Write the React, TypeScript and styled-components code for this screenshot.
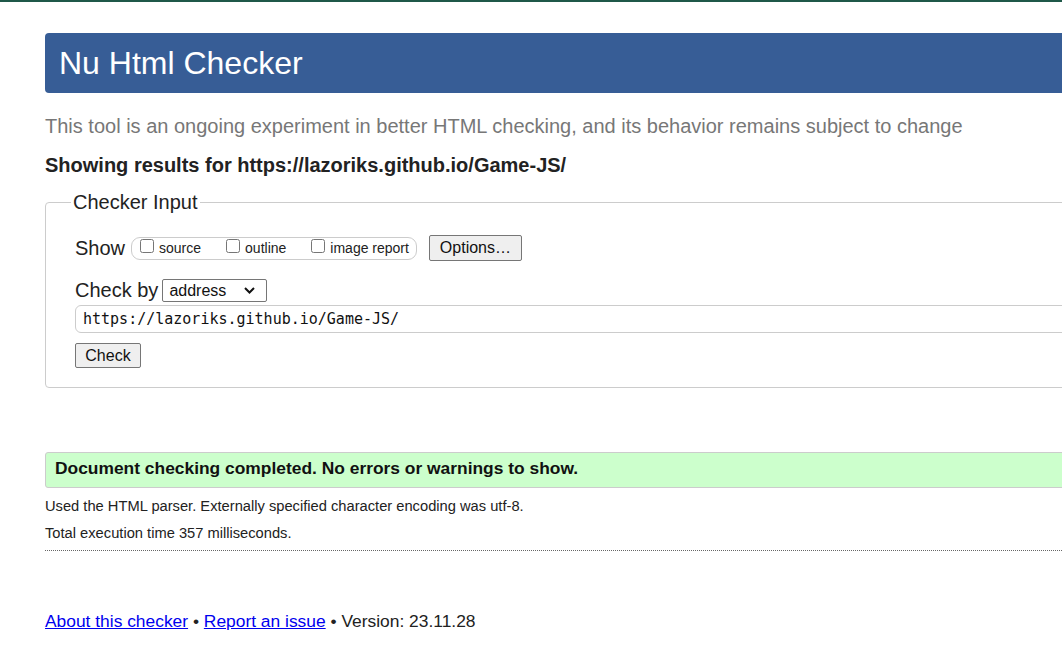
import React from "react";
import styled, { createGlobalStyle } from "styled-components";

const Global = createGlobalStyle`
  html, body { margin: 0; padding: 0; overflow: hidden; background: #fff; }
  body {
    font-family: "Liberation Sans", Arial, sans-serif;
    color: #222;
    width: 1062px;
    height: 667px;
  }
`;

const TopBar = styled.div`
  height: 2px;
  background: #1f5849;
`;

const Page = styled.div`
  width: 1160px;
  padding: 31px 0 0 45px;
  display: flex;
  flex-direction: column;
`;

const Header = styled.h1`
  margin: 0;
  height: 60px;
  line-height: 60px;
  padding: 0 14px;
  background: #375d96;
  color: #fff;
  font-size: 32px;
  font-weight: normal;
  border-radius: 4px 0 0 4px;
`;

const Intro = styled.p`
  margin: 22px 0 0;
  font-size: 20px;
  line-height: 23px;
  color: #777;
`;

const Heading = styled.h2`
  margin: 16px 0 0;
  font-size: 20px;
  line-height: 23px;
  font-weight: bold;
  color: #222;
`;

const Fieldset = styled.fieldset`
  margin: 14px 0 0;
  padding: 0 0 19px 29px;
  border: 1px solid #ccc;
  border-radius: 4px 0 0 4px;
  min-inline-size: 0;
`;

const Legend = styled.legend`
  margin-left: -4px;
  padding: 0 2px;
  font-size: 20px;
  line-height: 23px;
  color: #222;
`;

const Row = styled.div<{ $top: number }>`
  display: flex;
  align-items: center;
  margin-top: ${(p) => p.$top}px;
`;

const Label = styled.span`
  font-size: 20px;
  line-height: 23px;
  color: #222;
`;

const ShowGroup = styled.div`
  display: flex;
  align-items: center;
  gap: 25px;
  height: 21px;
  margin-left: 6px;
  padding: 0 7px 0 8px;
  border: 1px solid #ccc;
  border-radius: 9px;
`;

const CheckItem = styled.label`
  display: flex;
  align-items: center;
  gap: 5px;
  font-size: 14px;
  color: #222;
`;

const Box = styled.input`
  width: 14px;
  height: 14px;
  margin: 0;
  position: relative;
  top: -2px;
`;

const Button = styled.button<{ $w: number }>`
  height: 26px;
  width: ${(p) => p.$w}px;
  padding: 0;
  font-family: "Liberation Sans", Arial, sans-serif;
  font-size: 16px;
  color: #111;
  background: #efefef;
  border: 1px solid #767676;
  border-radius: 2px;
`;

const OptionsButton = styled(Button)`
  margin-left: 12px;
`;

const SelectWrap = styled.span`
  position: relative;
  display: inline-flex;
  margin-left: 4px;
`;

const Select = styled.select`
  appearance: none;
  width: 105px;
  height: 23px;
  padding: 0 0 0 6px;
  font-family: "Liberation Sans", Arial, sans-serif;
  font-size: 16px;
  color: #111;
  background: #fff;
  border: 1px solid #767676;
  border-radius: 2px;
`;

const Chevron = styled.svg`
  position: absolute;
  right: 12px;
  top: 8px;
  pointer-events: none;
`;

const UrlInput = styled.input`
  margin-top: 3px;
  height: 28px;
  box-sizing: border-box;
  width: 1100px;
  padding: 0 7px;
  font-family: "DejaVu Sans Mono", "Liberation Mono", monospace;
  font-size: 15px;
  color: #111;
  border: 1px solid #ccc;
  border-radius: 6px 0 0 6px;
`;

const CheckButton = styled(Button)`
  margin-top: 10px;
  height: 25px;
  align-self: flex-start;
`;

const Column = styled.div`
  display: flex;
  flex-direction: column;
`;

const Success = styled.div`
  margin-top: 64px;
  height: 34px;
  line-height: 31px;
  padding-left: 9px;
  background: #ccffcc;
  border: 1px solid #ccc;
  border-radius: 3px 0 0 3px;
  font-size: 17.4px;
  font-weight: bold;
  color: #111;
`;

const Note = styled.p<{ $top: number }>`
  margin: ${(p) => p.$top}px 0 0;
  font-size: 14.7px;
  line-height: 17px;
  color: #222;
`;

const Dotted = styled.hr`
  margin: 8px 0 0;
  border: 0;
  border-top: 1px dotted #666;
  width: 1017px;
`;

const Footer = styled.p`
  margin: 60px 0 0;
  font-size: 17.4px;
  line-height: 20px;
  color: #222;
`;

const Link = styled.a`
  color: #0000ee;
  text-decoration: underline;
`;

export default function App() {
  return (
    <>
      <Global />
      <TopBar />
      <Page>
        <Header>Nu Html Checker</Header>
        <Intro>
          This tool is an ongoing experiment in better HTML checking, and its behavior remains subject to change
        </Intro>
        <Heading>Showing results for https://lazoriks.github.io/Game-JS/</Heading>
        <Fieldset>
          <Legend>Checker Input</Legend>
          <Column>
            <Row $top={21}>
              <Label>Show</Label>
              <ShowGroup>
                <CheckItem>
                  <Box type="checkbox" />
                  source
                </CheckItem>
                <CheckItem>
                  <Box type="checkbox" />
                  outline
                </CheckItem>
                <CheckItem>
                  <Box type="checkbox" />
                  image report
                </CheckItem>
              </ShowGroup>
              <OptionsButton $w={93}>Options…</OptionsButton>
            </Row>
            <Row $top={18}>
              <Label>Check by</Label>
              <SelectWrap>
                <Select defaultValue="address">
                  <option value="address">address</option>
                  <option value="file">file upload</option>
                  <option value="text">text input</option>
                </Select>
                <Chevron width="11" height="7" viewBox="0 0 11 7">
                  <path d="M1 1 L5.5 5.5 L10 1" fill="none" stroke="#111" strokeWidth="2" />
                </Chevron>
              </SelectWrap>
            </Row>
            <UrlInput defaultValue="https://lazoriks.github.io/Game-JS/" />
            <CheckButton $w={66}>Check</CheckButton>
          </Column>
        </Fieldset>
        <Success>Document checking completed. No errors or warnings to show.</Success>
        <Note $top={10}>Used the HTML parser. Externally specified character encoding was utf-8.</Note>
        <Note $top={10}>Total execution time 357 milliseconds.</Note>
        <Dotted />
        <Footer>
          <Link href="#">About this checker</Link> • <Link href="#">Report an issue</Link> • Version: 23.11.28
        </Footer>
      </Page>
    </>
  );
}
